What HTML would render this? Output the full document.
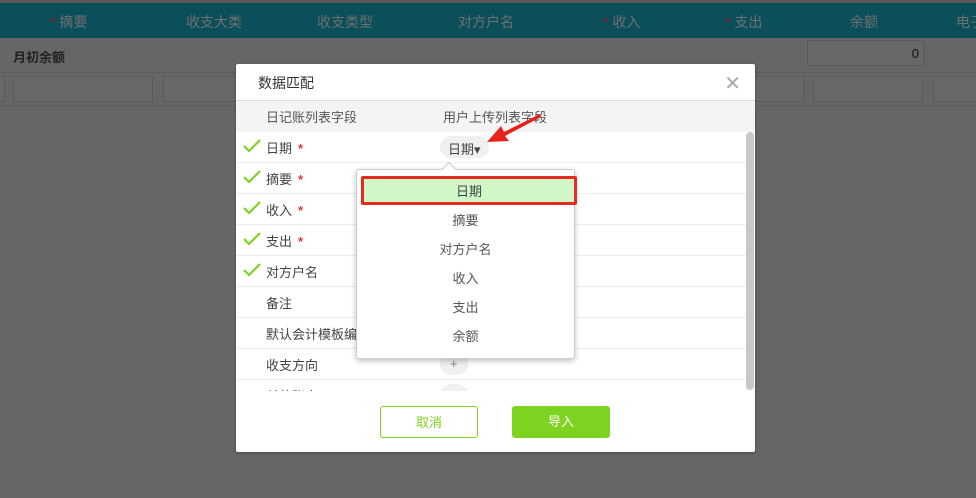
<!DOCTYPE html>
<html><head><meta charset="utf-8"><style>
*{margin:0;padding:0;box-sizing:border-box}
body{width:976px;height:498px;overflow:hidden;background:#666;font-family:"Liberation Sans","Noto Sans CJK SC",sans-serif;font-size:13px;position:relative}
.abs{position:absolute}
.top{left:0;top:0;width:976px;height:3px;background:#585858}
.hdr{left:0;top:3px;width:976px;height:35px;background:#0b4f5a;color:#707070;font-size:14px;white-space:nowrap}
.hdr span{position:absolute;top:9px}
.hdr i{color:#8a1a1a;font-style:normal}
.cell{border:1px solid #5a5a5a;background:#686868;height:26px;top:76px}
.modal{left:236px;top:64px;width:519px;height:388px;background:#fff;border-radius:2px;box-shadow:0 1px 3px rgba(0,0,0,.3);overflow:hidden}
.title{height:37px;border-bottom:1px solid #ddd;padding:9px 0 0 22px;font-size:14px;color:#333}
.x{position:absolute;right:14px;top:7px;font-size:20px;color:#aaa}
.th{height:31px;background:#f4f4f4;color:#555;position:relative}
.body{height:259px;overflow:hidden}
.row{height:31px;border-bottom:1px solid #eee;position:relative;color:#444}
.row span,.th span{position:absolute;top:6px}
.ck{left:6px;top:5px!important}
.st{color:#e33;margin-left:6px}
.pill{position:absolute;left:204px;top:4px;height:22px;border-radius:11px;background:#f0f0f0;padding:3px 8px;font-size:13px}
.dd{left:356px;top:169px;width:219px;height:190px;background:#fff;border:1px solid #ccc;border-radius:3px;box-shadow:0 2px 6px rgba(0,0,0,.25);text-align:center;color:#555}
.dd div{height:29px;line-height:32px}
.btn{position:absolute;top:342px;width:98px;height:32px;border-radius:3px;text-align:center;line-height:31px;font-size:13px}
</style></head><body>
<div class="abs top"></div>
<div class="abs hdr">
<span style="left:50px"><i>* </i>摘要</span><span style="left:186px">收支大类</span><span style="left:317px">收支类型</span><span style="left:458px">对方户名</span><span style="left:603px"><i>* </i>收入</span><span style="left:725px"><i>* </i>支出</span><span style="left:850px">余额</span><span style="left:956px">电子</span>
</div>
<div class="abs" style="left:13px;top:47px;font-size:13px;font-weight:bold;color:#222">月初余额</div>
<div class="abs" style="left:807px;top:40px;width:117px;height:26px;border:1px solid #5a5a5a;background:#686868;text-align:right;padding:5px 4px;color:#111">0</div>
<div class="abs" style="left:0;top:72px;width:976px;height:1px;background:#5c5c5c"></div>
<div class="abs" style="left:0;top:105px;width:976px;height:1px;background:#5c5c5c"></div>
<div class="abs cell" style="left:-3px;width:8px"></div>
<div class="abs cell" style="left:13px;width:140px"></div>
<div class="abs cell" style="left:163px;width:80px"></div>
<div class="abs cell" style="left:740px;width:64px"></div>
<div class="abs cell" style="left:813px;width:110px"></div>
<div class="abs cell" style="left:933px;width:50px"></div>

<div class="abs modal">
<div class="title">数据匹配<span class="x">✕</span></div>
<div class="th"><span style="left:30px">日记账列表字段</span><span style="left:207px">用户上传列表字段</span></div>
<div class="body">
<div class="row"><span class="ck"><svg width="20" height="18"><path d="M2 9l5 5L18 3" stroke="#7ed321" stroke-width="2.2" fill="none"/></svg></span><span style="left:30px">日期<b class="st">*</b></span><div class="pill">日期▾</div></div>
<div class="row"><span class="ck"><svg width="20" height="18"><path d="M2 9l5 5L18 3" stroke="#7ed321" stroke-width="2.2" fill="none"/></svg></span><span style="left:30px">摘要<b class="st">*</b></span></div>
<div class="row"><span class="ck"><svg width="20" height="18"><path d="M2 9l5 5L18 3" stroke="#7ed321" stroke-width="2.2" fill="none"/></svg></span><span style="left:30px">收入<b class="st">*</b></span></div>
<div class="row"><span class="ck"><svg width="20" height="18"><path d="M2 9l5 5L18 3" stroke="#7ed321" stroke-width="2.2" fill="none"/></svg></span><span style="left:30px">支出<b class="st">*</b></span></div>
<div class="row"><span class="ck"><svg width="20" height="18"><path d="M2 9l5 5L18 3" stroke="#7ed321" stroke-width="2.2" fill="none"/></svg></span><span style="left:30px">对方户名</span></div>
<div class="row"><span style="left:30px">备注</span></div>
<div class="row"><span style="left:30px">默认会计模板编码</span></div>
<div class="row"><span style="left:30px">收支方向</span><div class="pill" style="color:#888;padding:3px 10px">+</div></div>
<div class="row" style="border:none"><span style="left:30px">付款账户</span><div class="pill" style="width:28px"></div></div>
</div>
<div class="abs" style="left:510px;top:68px;width:8px;height:258px;background:#c8c8c8;border-radius:4px"></div>
<div class="btn" style="left:144px;border:1px solid #7ed321;color:#7ed321">取消</div>
<div class="btn" style="left:276px;background:#7ed321;color:#fff">导入</div>
</div>

<svg class="abs" style="left:484px;top:110px" width="60" height="40"><path d="M56 4 L20 22 L17 16 L3 32 L25 31 L21 26 L57 7 Z" fill="#e8221a"/></svg>

<div class="abs dd">
<div style="margin:6px 0 0 4px;width:216px;background:#d1f7c8;border:3px solid #e52a1f;border-radius:2px;height:29px;line-height:25px;color:#444">日期</div>
<div>摘要</div><div>对方户名</div><div>收入</div><div>支出</div><div>余额</div>
</div>
<div class="abs" style="left:444px;top:164px;width:10px;height:10px;background:#fff;border-left:1px solid #ccc;border-top:1px solid #ccc;transform:rotate(45deg)"></div>
</body></html>
